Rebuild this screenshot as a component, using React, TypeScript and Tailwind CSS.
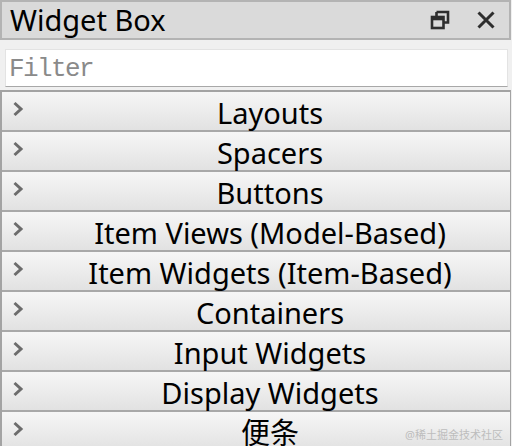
import React from 'react';

const CATEGORIES = [
  'Layouts',
  'Spacers',
  'Buttons',
  'Item Views (Model-Based)',
  'Item Widgets (Item-Based)',
  'Containers',
  'Input Widgets',
  'Display Widgets',
  '便条',
];

function Chevron() {
  return (
    <svg viewBox="0 0 14 16" className="w-[14px] h-[16px] shrink-0 self-start mt-[9px] ml-[9px]">
      <polyline points="3.5,2 10,8 3.5,14" fill="none" stroke="#6c6c6c" strokeWidth="3" />
    </svg>
  );
}

function RestoreIcon() {
  return (
    <svg width="20" height="20" viewBox="0 0 20 20">
      <path d="M6.5 2 H18 V12.5 H14" fill="none" stroke="#2e2e2e" strokeWidth="2.6" />
      <path d="M6.5 2 V6.5" fill="none" stroke="#2e2e2e" strokeWidth="2.6" />
      <rect x="2" y="7" width="11.5" height="11" fill="none" stroke="#2e2e2e" strokeWidth="2.6" />
      <path d="M2 9 H13.5" stroke="#2e2e2e" strokeWidth="2.6" />
    </svg>
  );
}

function CloseIcon() {
  return (
    <svg width="20" height="20" viewBox="0 0 20 20">
      <path d="M2.5 2.5 L17.5 17.5 M17.5 2.5 L2.5 17.5" stroke="#2e2e2e" strokeWidth="3" />
    </svg>
  );
}

export default function App() {
  const font = { fontFamily: '"Noto Sans", "Noto Sans CJK SC", sans-serif' };
  return (
    <div className="relative w-[512px] h-[446px] overflow-hidden bg-[#f0f0f0]" style={font}>
      {/* Dock title bar */}
      <div className="flex items-center h-[40px] bg-[#dadada] border-2 border-[#b3b3b3] pl-[8px] pr-[13px] w-[511px]">
        <span className="text-[29px] leading-none text-black flex-1 -mt-[1px]">Widget Box</span>
        <div className="flex items-center gap-[26px]">
          <RestoreIcon />
          <CloseIcon />
        </div>
      </div>

      {/* Filter */}
      <div className="pt-[9px] pl-[5px] pr-[4px] pb-[3px]">
        <div className="h-[38px] w-[503px] bg-white border border-[#e3e3e3] border-b-[#a8a8a8] flex items-center pl-[3px]">
          <span
            className="text-[26px] leading-none text-[#8a8a8a] tracking-[-1.6px] mt-[2px]"
            style={{ fontFamily: '"Liberation Mono", monospace' }}
          >
            Filter
          </span>
        </div>
      </div>

      {/* Category list */}
      <div className="w-[511px] border-t-2 border-l-2 border-r border-[#a3a3a3] bg-white">
        {CATEGORIES.map((c) => (
          <div
            key={c}
            className="flex items-center h-[40px] border-b-2 border-[#a8a8a8] bg-gradient-to-b from-[#f6f6f6] to-[#e2e2e2]"
          >
            <Chevron />
            <span className="flex-1 text-center text-[29px] leading-none text-black pt-[3px] pl-[5px] whitespace-nowrap">{c}</span>
          </div>
        ))}
      </div>

      <span className="absolute left-[405px] top-[427px] text-[11px] text-[#bdbdbd]" style={font}>
        @稀土掘金技术社区
      </span>
    </div>
  );
}
